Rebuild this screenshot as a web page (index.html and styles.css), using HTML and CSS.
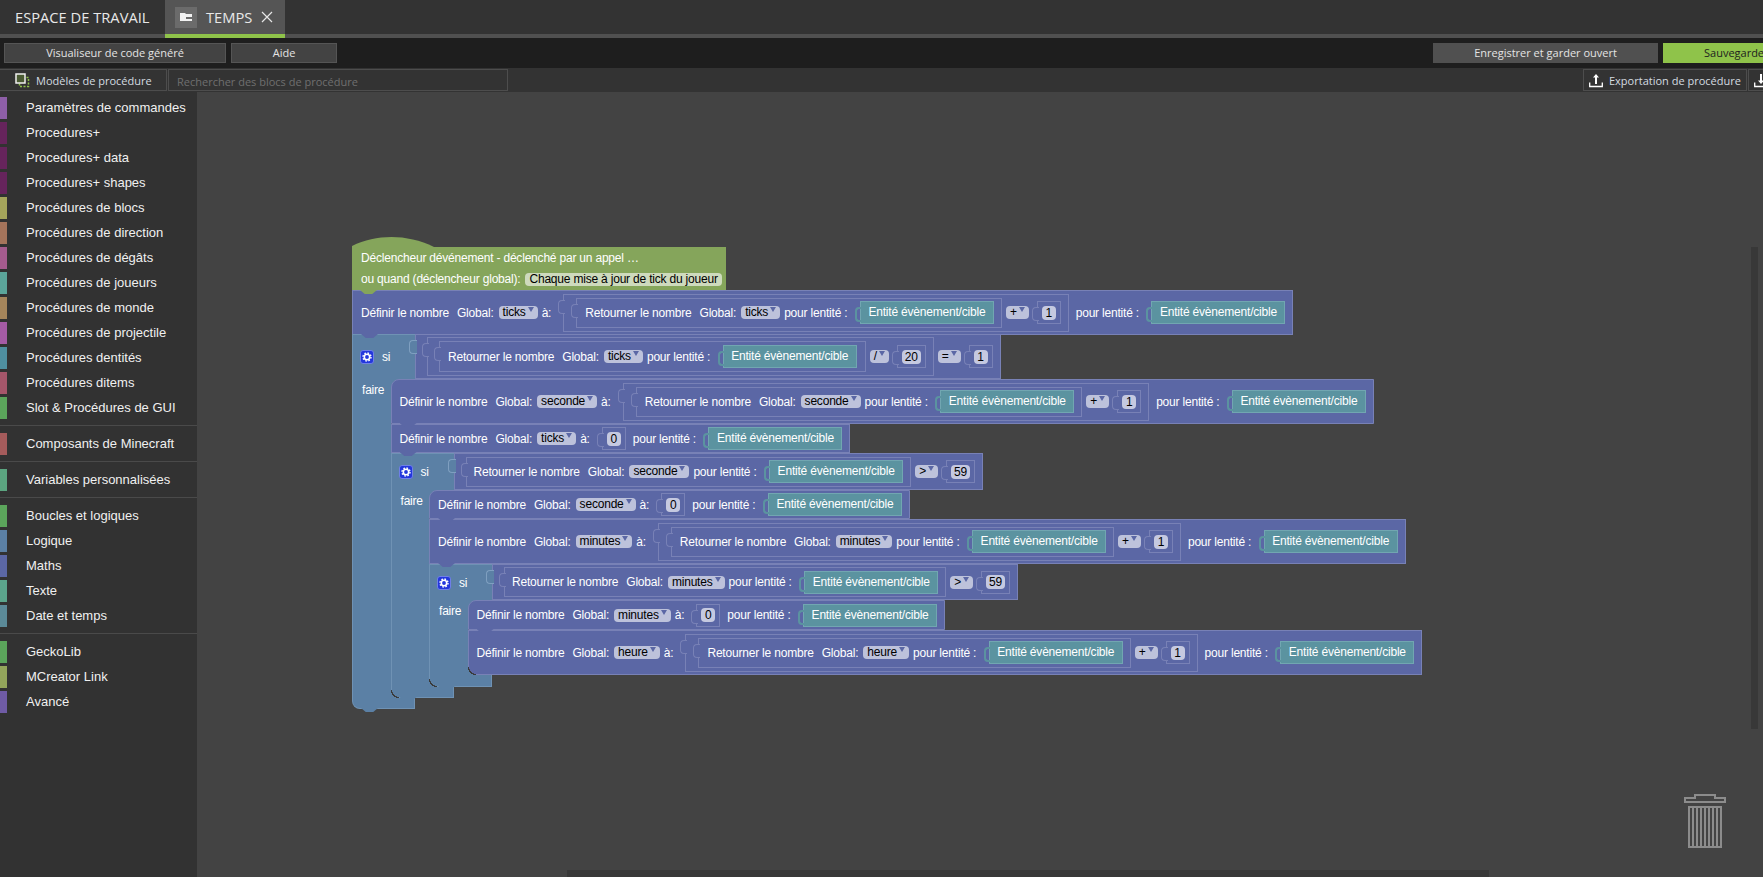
FILE: index.html
```html
<!DOCTYPE html>
<html lang="fr">
<head>
<meta charset="utf-8">
<title>TEMPS</title>
<link rel="stylesheet" href="styles.css">
</head>
<body>
<header class="tabbar">
  <div class="tab">ESPACE DE TRAVAIL</div>
  <div class="tab tab-active">
    <span class="tab-icon"><svg width="12" height="10" viewBox="0 0 12 10"><path d="M0 1h5l1 1h6v3H6v2h6v2H0z" fill="#f2f2f2"/></svg></span>
    <span class="tab-name">TEMPS</span>
    <svg class="tab-close" width="12" height="12" viewBox="0 0 12 12"><path d="M1 1l10 10M11 1L1 11" stroke="#e6e6e6" stroke-width="1.2" fill="none"/></svg>
  </div>
</header>
<div class="toolbar">
  <button class="btn btn-code">Visualiseur de code généré</button>
  <button class="btn btn-help">Aide</button>
  <div class="spacer"></div>
  <button class="btn btn-keep">Enregistrer et garder ouvert</button>
  <button class="btn btn-save">Sauvegarde</button>
</div>
<div class="subbar">
  <div class="tool tool-templates">
    <svg width="15" height="15" viewBox="0 0 15 15"><rect x="4.5" y="4.5" width="9" height="9" fill="none" stroke="#8fc34a" stroke-width="1.5" stroke-dasharray="2 1.5"/><rect x="1" y="1" width="9" height="9" fill="#4a5a33" stroke="#f0f0f0" stroke-width="1.5"/></svg>
    <span>Modèles de procédure</span>
  </div>
  <div class="search">Rechercher des blocs de procédure</div>
  <div class="spacer"></div>
  <div class="tool tool-export">
    <svg class="ico" width="14" height="15" viewBox="0 0 14 15"><path d="M6 11V4.500H4L7 1l3 3.500H8V11z" fill="#fff"/><path d="M.7 9.500v4h12.600v-4" stroke="#fff" stroke-width="1.300" fill="none"/></svg>
    <span>Exportation de procédure</span>
  </div>
  <div class="tool tool-import">
    <svg class="ico" width="14" height="15" viewBox="0 0 14 15"><path d="M6 1v6.500H4L7 11l3-3.500H8V1z" fill="#fff"/><path d="M.7 9.500v4h12.600v-4" stroke="#fff" stroke-width="1.300" fill="none"/></svg>
  </div>
</div>
<main class="main">
  <nav class="sidebar">
    <div class="group">
      <div class="item"><i class="sw c-params"></i>Paramètres de commandes</div>
      <div class="item"><i class="sw c-plus"></i>Procedures+</div>
      <div class="item"><i class="sw c-plus"></i>Procedures+ data</div>
      <div class="item"><i class="sw c-plus"></i>Procedures+ shapes</div>
      <div class="item"><i class="sw c-blocs"></i>Procédures de blocs</div>
      <div class="item"><i class="sw c-dir"></i>Procédures de direction</div>
      <div class="item"><i class="sw c-deg"></i>Procédures de dégâts</div>
      <div class="item"><i class="sw c-jou"></i>Procédures de joueurs</div>
      <div class="item"><i class="sw c-mon"></i>Procédures de monde</div>
      <div class="item"><i class="sw c-pro"></i>Procédures de projectile</div>
      <div class="item"><i class="sw c-ent"></i>Procédures dentités</div>
      <div class="item"><i class="sw c-ite"></i>Procédures ditems</div>
      <div class="item"><i class="sw c-green"></i>Slot &amp; Procédures de GUI</div>
    </div>
    <div class="group">
      <div class="item"><i class="sw c-min"></i>Composants de Minecraft</div>
    </div>
    <div class="group">
      <div class="item"><i class="sw c-var"></i>Variables personnalisées</div>
    </div>
    <div class="group">
      <div class="item"><i class="sw c-green"></i>Boucles et logiques</div>
      <div class="item"><i class="sw c-log"></i>Logique</div>
      <div class="item"><i class="sw c-mat"></i>Maths</div>
      <div class="item"><i class="sw c-txt"></i>Texte</div>
      <div class="item"><i class="sw c-dat"></i>Date et temps</div>
    </div>
    <div class="group group-last">
      <div class="item"><i class="sw c-green"></i>GeckoLib</div>
      <div class="item"><i class="sw c-lnk"></i>MCreator Link</div>
      <div class="item"><i class="sw c-adv"></i>Avancé</div>
    </div>
  </nav>
  <section class="canvas">
    <div class="script">
      <div class="hat notch">
        <svg class="hat-top" width="82" height="10" viewBox="0 0 82 10"><path d="M0 10V9C25-3 55-3 82 10z" fill="#85a55b"/></svg>
        <div class="hat-line">Déclencheur dévénement - déclenché par un appel …</div>
        <div class="hat-line">ou quand (déclencheur global):<span class="dd-hat">Chaque mise à jour de tick du joueur</span></div>
      </div>

      <div class="row tall notch overlap">
        <span class="def">Définir le nombre</span><span>Global:</span><span class="dd">ticks</span><span class="to">à:</span>
        <div class="slot lvl-a">
          <div class="slot lvl-b">
            <span class="def">Retourner le nombre</span><span>Global:</span><span class="dd">ticks</span><span class="pour">pour lentité :</span><span class="ent">Entité évènement/cible</span>
          </div>
          <span class="dd op">+</span><span class="slot numslot"><b class="num">1</b></span>
        </div>
        <span class="pour after">pour lentité :</span><span class="ent">Entité évènement/cible</span>
      </div>

      <div class="if">
        <div class="if-head">
          <div class="cap"><span class="gear"><svg width="10" height="10" viewBox="0 0 10 10"><circle cx="5" cy="5" r="2.700" fill="none" stroke="#fff" stroke-width="1.600"/><circle cx="5" cy="5" r="4" fill="none" stroke="#fff" stroke-width="1.400" stroke-dasharray="1.600 1.540"/></svg></span><span>si</span></div>
          <div class="headval tall">
            <div class="slot lvl-c">
              <div class="slot lvl-d">
                <span class="def">Retourner le nombre</span><span>Global:</span><span class="dd">ticks</span><span class="pour">pour lentité :</span><span class="ent">Entité évènement/cible</span>
              </div>
              <span class="dd op">/</span><span class="slot numslot"><b class="num">20</b></span>
            </div>
            <span class="dd op">=</span><span class="slot numslot"><b class="num">1</b></span>
          </div>
        </div>
        <div class="if-body">
          <div class="bar">faire</div>
          <div class="stack">
            <div class="row tall notch first">
              <span class="def">Définir le nombre</span><span>Global:</span><span class="dd">seconde</span><span class="to">à:</span>
              <div class="slot lvl-a">
                <div class="slot lvl-b">
                  <span class="def">Retourner le nombre</span><span>Global:</span><span class="dd">seconde</span><span class="pour">pour lentité :</span><span class="ent">Entité évènement/cible</span>
                </div>
                <span class="dd op">+</span><span class="slot numslot"><b class="num">1</b></span>
              </div>
              <span class="pour after">pour lentité :</span><span class="ent">Entité évènement/cible</span>
            </div>
            <div class="row notch">
              <span class="def">Définir le nombre</span><span>Global:</span><span class="dd">ticks</span><span class="to">à:</span><span class="slot numslot"><b class="num">0</b></span><span class="pour after">pour lentité :</span><span class="ent">Entité évènement/cible</span>
            </div>

            <div class="if">
              <div class="if-head">
                <div class="cap"><span class="gear"><svg width="10" height="10" viewBox="0 0 10 10"><circle cx="5" cy="5" r="2.700" fill="none" stroke="#fff" stroke-width="1.600"/><circle cx="5" cy="5" r="4" fill="none" stroke="#fff" stroke-width="1.400" stroke-dasharray="1.600 1.540"/></svg></span><span>si</span></div>
                <div class="headval short">
                  <div class="slot lvl-e">
                    <span class="def">Retourner le nombre</span><span>Global:</span><span class="dd">seconde</span><span class="pour">pour lentité :</span><span class="ent">Entité évènement/cible</span>
                  </div>
                  <span class="dd op">&gt;</span><span class="slot numslot"><b class="num">59</b></span>
                </div>
              </div>
              <div class="if-body">
                <div class="bar">faire</div>
                <div class="stack">
                  <div class="row notch first">
                    <span class="def">Définir le nombre</span><span>Global:</span><span class="dd">seconde</span><span class="to">à:</span><span class="slot numslot"><b class="num">0</b></span><span class="pour after">pour lentité :</span><span class="ent">Entité évènement/cible</span>
                  </div>
                  <div class="row tall notch">
                    <span class="def">Définir le nombre</span><span>Global:</span><span class="dd">minutes</span><span class="to">à:</span>
                    <div class="slot lvl-a">
                      <div class="slot lvl-b">
                        <span class="def">Retourner le nombre</span><span>Global:</span><span class="dd">minutes</span><span class="pour">pour lentité :</span><span class="ent">Entité évènement/cible</span>
                      </div>
                      <span class="dd op">+</span><span class="slot numslot"><b class="num">1</b></span>
                    </div>
                    <span class="pour after">pour lentité :</span><span class="ent">Entité évènement/cible</span>
                  </div>

                  <div class="if">
                    <div class="if-head">
                      <div class="cap"><span class="gear"><svg width="10" height="10" viewBox="0 0 10 10"><circle cx="5" cy="5" r="2.700" fill="none" stroke="#fff" stroke-width="1.600"/><circle cx="5" cy="5" r="4" fill="none" stroke="#fff" stroke-width="1.400" stroke-dasharray="1.600 1.540"/></svg></span><span>si</span></div>
                      <div class="headval shorter">
                        <div class="slot lvl-e">
                          <span class="def">Retourner le nombre</span><span>Global:</span><span class="dd">minutes</span><span class="pour">pour lentité :</span><span class="ent">Entité évènement/cible</span>
                        </div>
                        <span class="dd op">&gt;</span><span class="slot numslot"><b class="num">59</b></span>
                      </div>
                    </div>
                    <div class="if-body">
                      <div class="bar">faire</div>
                      <div class="stack">
                        <div class="row notch first mid">
                          <span class="def">Définir le nombre</span><span>Global:</span><span class="dd">minutes</span><span class="to">à:</span><span class="slot numslot"><b class="num">0</b></span><span class="pour after">pour lentité :</span><span class="ent">Entité évènement/cible</span>
                        </div>
                        <div class="row tall last">
                          <span class="def">Définir le nombre</span><span>Global:</span><span class="dd">heure</span><span class="to">à:</span>
                          <div class="slot lvl-a">
                            <div class="slot lvl-b">
                              <span class="def">Retourner le nombre</span><span>Global:</span><span class="dd">heure</span><span class="pour">pour lentité :</span><span class="ent">Entité évènement/cible</span>
                            </div>
                            <span class="dd op">+</span><span class="slot numslot"><b class="num">1</b></span>
                          </div>
                          <span class="pour after">pour lentité :</span><span class="ent">Entité évènement/cible</span>
                        </div>
                      </div>
                    </div>
                    <div class="foot foot-tall notch-teal"></div>
                  </div>
                </div>
              </div>
              <div class="foot notch-teal"></div>
            </div>
          </div>
        </div>
        <div class="foot notch-teal"></div>
      </div>
    </div>

    <svg class="trash" width="42" height="54" viewBox="0 0 42 54">
      <g fill="none" stroke="#8c8c8c" stroke-width="2">
        <path d="M1 4h10V1h20v3h10v4H1z"/>
        <rect x="5" y="13" width="32" height="40"/>
        <path d="M9 13v40M13 13v40M17 13v40M21 13v40M25 13v40M29 13v40M33 13v40"/>
      </g>
    </svg>
    <div class="vscroll"></div>
    <div class="hscroll"></div>
  </section>
</main>
</body>
</html>
```

FILE: styles.css
```css
* { box-sizing: border-box; }
html, body { margin: 0; height: 100%; }
body {
  width: 1763px;
  height: 877px;
  overflow: hidden;
  display: flex;
  flex-direction: column;
  background: #434343;
  font-family: "Liberation Sans", Arial, sans-serif;
}

/* tabs */
.tabbar {
  height: 38px;
  flex: none;
  display: flex;
  background: #333;
  border-bottom: 4px solid #505050;
  font-family: "Open Sans", sans-serif;
  font-size: 14.700px;
  color: #e8e8e8;
}
.tab {
  height: 34px;
  width: 165px;
  display: flex;
  align-items: center;
  padding-left: 15px;
  white-space: nowrap;
}
.tab-active {
  position: relative;
  width: 120px;
  padding-left: 10px;
  background: #555;
}
.tab-active::after {
  content: "";
  position: absolute;
  left: 0;
  right: 0;
  top: 34px;
  height: 4px;
  background: #8fc34a;
}
.tab-icon {
  width: 22px;
  height: 21px;
  margin-right: 9px;
  display: flex;
  align-items: center;
  justify-content: center;
  background: #6b6b6b;
}
.tab-close { margin-left: 9px; }

/* toolbar */
.toolbar {
  height: 30px;
  flex: none;
  display: flex;
  align-items: flex-start;
  padding: 5px 0 0 4px;
  background: #1e1e1e;
  overflow: hidden;
}
.spacer { flex: 1; min-width: 0; }
.btn {
  height: 20px;
  padding: 0;
  flex: none;
  border: 1px solid #555;
  background: #434343;
  color: #e4e4e4;
  font-family: "Open Sans", sans-serif;
  font-size: 11px;
  line-height: 16px;
}
.btn-code { width: 222px; margin-right: 5px; }
.btn-help { width: 106px; }
.btn-keep { width: 225px; margin-right: 5px; background: #505050; border-color: #505050; }
.btn-save {
  width: 100px;
  padding-left: 40px;
  text-align: left;
  white-space: nowrap;
  background: #8fc34a;
  border-color: #8fc34a;
  color: #1e1e1e;
}

/* second bar */
.subbar {
  height: 24px;
  flex: none;
  display: flex;
  align-items: flex-start;
  padding-top: 1px;
  background: #333;
  overflow: hidden;
  font-family: "Open Sans", sans-serif;
  font-size: 11px;
  color: #d4dbe0;
}
.tool {
  height: 22px;
  display: flex;
  align-items: center;
  border: 1px solid #4d4d4d;
  flex: none;
  white-space: nowrap;
}
.ico { flex: none; }
.tool-templates { width: 167px; padding-left: 15px; gap: 6px; border-left: 0; }
.search {
  width: 340px;
  height: 22px;
  margin-left: 1px;
  padding: 4px 0 0 8px;
  border: 1px solid #4d4d4d;
  color: #6f6f6f;
  white-space: nowrap;
}
.tool-export { width: 164px; padding-left: 5px; gap: 6px; }
.tool-import { width: 15px; margin-left: 1px; padding-left: 5px; border-right: 0; overflow: hidden; }

/* sidebar */
.main { flex: 1; min-height: 0; display: flex; }
.sidebar {
  width: 197px;
  flex: none;
  padding-top: 3px;
  background: #323232;
  color: #f0f0f0;
  font-size: 13px;
}
.group { padding-bottom: 5px; margin-bottom: 5px; border-bottom: 1px solid #4a4a4a; }
.group-last { border-bottom: 0; }
.item { height: 25px; display: flex; align-items: center; white-space: nowrap; }
.sw { width: 7px; height: 22px; margin-right: 19px; flex: none; }
.c-params { background: #8e5fa8; }
.c-plus { background: #66245c; }
.c-blocs { background: #a5a55b; }
.c-dir { background: #a5745b; }
.c-deg { background: #a55b8e; }
.c-jou { background: #5ba59a; }
.c-mon { background: #a5855b; }
.c-pro { background: #a55ba5; }
.c-ent { background: #4f8fa0; }
.c-ite { background: #a5566a; }
.c-green { background: #5ba55b; }
.c-min { background: #a55b5b; }
.c-var { background: #5ba580; }
.c-log { background: #5b80a5; }
.c-mat { background: #5b67a5; }
.c-txt { background: #5ba58c; }
.c-dat { background: #5b8a98; }
.c-lnk { background: #93a55b; }
.c-adv { background: #6f5ba5; }

/* workspace: blocks sit on a free canvas */
.canvas { flex: 1; min-width: 0; position: relative; overflow: hidden; background: #434343; }
.script {
  position: absolute;
  left: 155px;
  top: 155px;
  display: flex;
  flex-direction: column;
  align-items: flex-start;
  font-size: 12px;
  letter-spacing: -0.2px;
  color: #fff;
  white-space: nowrap;
}
.script span { flex: none; }

.hat {
  position: relative;
  width: 374px;
  height: 43px;
  padding: 1px 0 0 9px;
  background: #85a55b;
  z-index: 2;
}
.hat-top { position: absolute; left: 0; bottom: 100%; }
.hat-line { height: 21px; line-height: 21px; display: flex; align-items: center; }
.dd-hat {
  height: 13px;
  margin-left: 5px;
  padding: 0 4px;
  line-height: 13px;
  border-radius: 4px;
  background: #cedabd;
  color: #000;
}

.row {
  position: relative;
  height: 29px;
  display: flex;
  align-items: center;
  padding: 0 7px 0 8px;
  background: #5b67a5;
  border: 1px solid #7881b6;
}
.row.tall { height: 45px; }
.overlap { margin-bottom: -1px; }
.first { border-top-left-radius: 8px; }
.mid { height: 30px; }
.last::before {
  content: "";
  position: absolute;
  left: -1px;
  bottom: -1px;
  width: 8px;
  height: 8px;
  background: radial-gradient(circle at 100% 0, #5b67a5 0 6.800px, #3a3a3a 7px 8px, #5b80a5 8.200px);
}

.notch::after, .notch-teal::after {
  content: "";
  position: absolute;
  left: 8px;
  top: 100%;
  width: 17px;
  height: 4px;
  background: #5b67a5;
  clip-path: polygon(0 0, 100% 0, 72% 100%, 28% 100%);
  z-index: 3;
}
.hat.notch::after { background: #85a55b; }
.notch-teal::after { background: #5b80a5; }

.def { margin-right: 8px; }
.dd {
  position: relative;
  height: 13px;
  margin: 0 4px 0 5px;
  padding: 0 12px 0 4px;
  line-height: 13px;
  border-radius: 4px;
  background: #bdc2db;
  color: #000;
}
.dd::after {
  content: "";
  position: absolute;
  right: 4px;
  top: 1px;
  border: 3px solid transparent;
  border-top: 5px solid #5b67a5;
  border-bottom: 0;
}
.op { margin: 0 8px 0 4px; }
.to { margin-right: 12px; }
.pour { margin-right: 12.500px; }
.after { margin-left: 7px; }

.ent {
  position: relative;
  width: 134px;
  height: 23px;
  line-height: 21px;
  text-align: center;
  background: #5b93a0;
  border: 1px solid #71a6b1;
}
.ent::before {
  content: "";
  position: absolute;
  left: -6px;
  top: 5px;
  width: 5px;
  height: 11px;
  border: 2px solid #5b93a0;
  border-right: 0;
  border-radius: 4px 0 0 4px;
}

.slot {
  position: relative;
  display: flex;
  align-items: center;
  border: 1px solid #7881b6;
  background: #5b67a5;
}
.slot::before {
  content: "";
  position: absolute;
  left: -6px;
  top: 5px;
  width: 6px;
  height: 12px;
  background: #5b67a5;
  border: 1px solid #7881b6;
  border-right: 0;
  border-radius: 4px 0 0 4px;
}
.numslot { height: 23px; padding: 0 4px; flex: none; }
.num {
  min-width: 14px;
  height: 14px;
  padding: 0 3px;
  font-weight: 400;
  line-height: 14px;
  text-align: center;
  border-radius: 4px;
  background: #c5c9e0;
  color: #000;
}
.lvl-a { height: 38px; padding: 0 7px 0 12px; }
.lvl-b { height: 30px; padding: 0 7px 0 8px; }
.lvl-c { height: 39px; padding: 0 7px 0 11px; }
.lvl-d { height: 31px; padding: 0 8px 0 8px; }
.lvl-e { height: 30px; margin-left: 11px; padding: 0 7px 0 7px; }

.if { display: flex; flex-direction: column; align-items: flex-start; }
.if-head { display: flex; position: relative; }
.cap {
  position: relative;
  width: 63px;
  display: flex;
  align-items: center;
  gap: 8px;
  padding-left: 7px;
  background: #5b80a5;
  border-left: 1px solid #6f92b4;
  border-top: 1px solid #6f92b4;
}
.gear {
  width: 14px;
  height: 14px;
  display: flex;
  align-items: center;
  justify-content: center;
  border-radius: 3px;
  background: #2337dc;
  border: 1px solid #6f7fe8;
}
.headval {
  position: relative;
  display: flex;
  align-items: center;
  padding-right: 7px;
  background: #5b67a5;
  border: 1px solid #7881b6;
}
.headval::before {
  content: "";
  position: absolute;
  left: -7px;
  top: 5px;
  width: 7px;
  height: 12px;
  background: #5b80a5;
  border: 1px solid #7f9fc0;
  border-right: 0;
  border-radius: 4px 0 0 4px;
}
.headval.tall { height: 45px; padding-left: 11px; }
.headval.short { height: 37px; }
.headval.shorter { height: 36px; }
.if-body { display: flex; }
.bar {
  position: relative;
  width: 38.500px;
  flex: none;
  padding: 3px 0 0 9px;
  line-height: 16px;
  background: #5b80a5;
  border-left: 1px solid #6f92b4;
}
.bar::before {
  content: "";
  position: absolute;
  left: 100%;
  top: 0;
  width: 8px;
  height: 8px;
  background: #5b80a5;
}
.stack {
  position: relative;
  z-index: 1;
  display: flex;
  flex-direction: column;
  align-items: flex-start;
}
.foot {
  position: relative;
  width: 63px;
  height: 11px;
  background: #5b80a5;
  border: 1px solid #6f92b4;
  border-top: 0;
  border-bottom-left-radius: 8px;
}
.stack .foot { border-bottom-left-radius: 0; }
.stack .foot::before {
  content: "";
  position: absolute;
  left: -1px;
  bottom: -1px;
  width: 8px;
  height: 8px;
  background: radial-gradient(circle at 100% 0, #5b80a5 0 6.800px, #3a3a3a 7px 8px, #5b80a5 8.200px);
}
.foot-tall { height: 12px; }

.trash { position: absolute; right: 37px; top: 702px; }
.vscroll { position: absolute; left: 1554px; top: 155px; width: 7px; height: 482px; background: #383838; }
.hscroll { position: absolute; left: 370px; top: 778px; width: 922px; height: 7px; background: #383838; }
```
